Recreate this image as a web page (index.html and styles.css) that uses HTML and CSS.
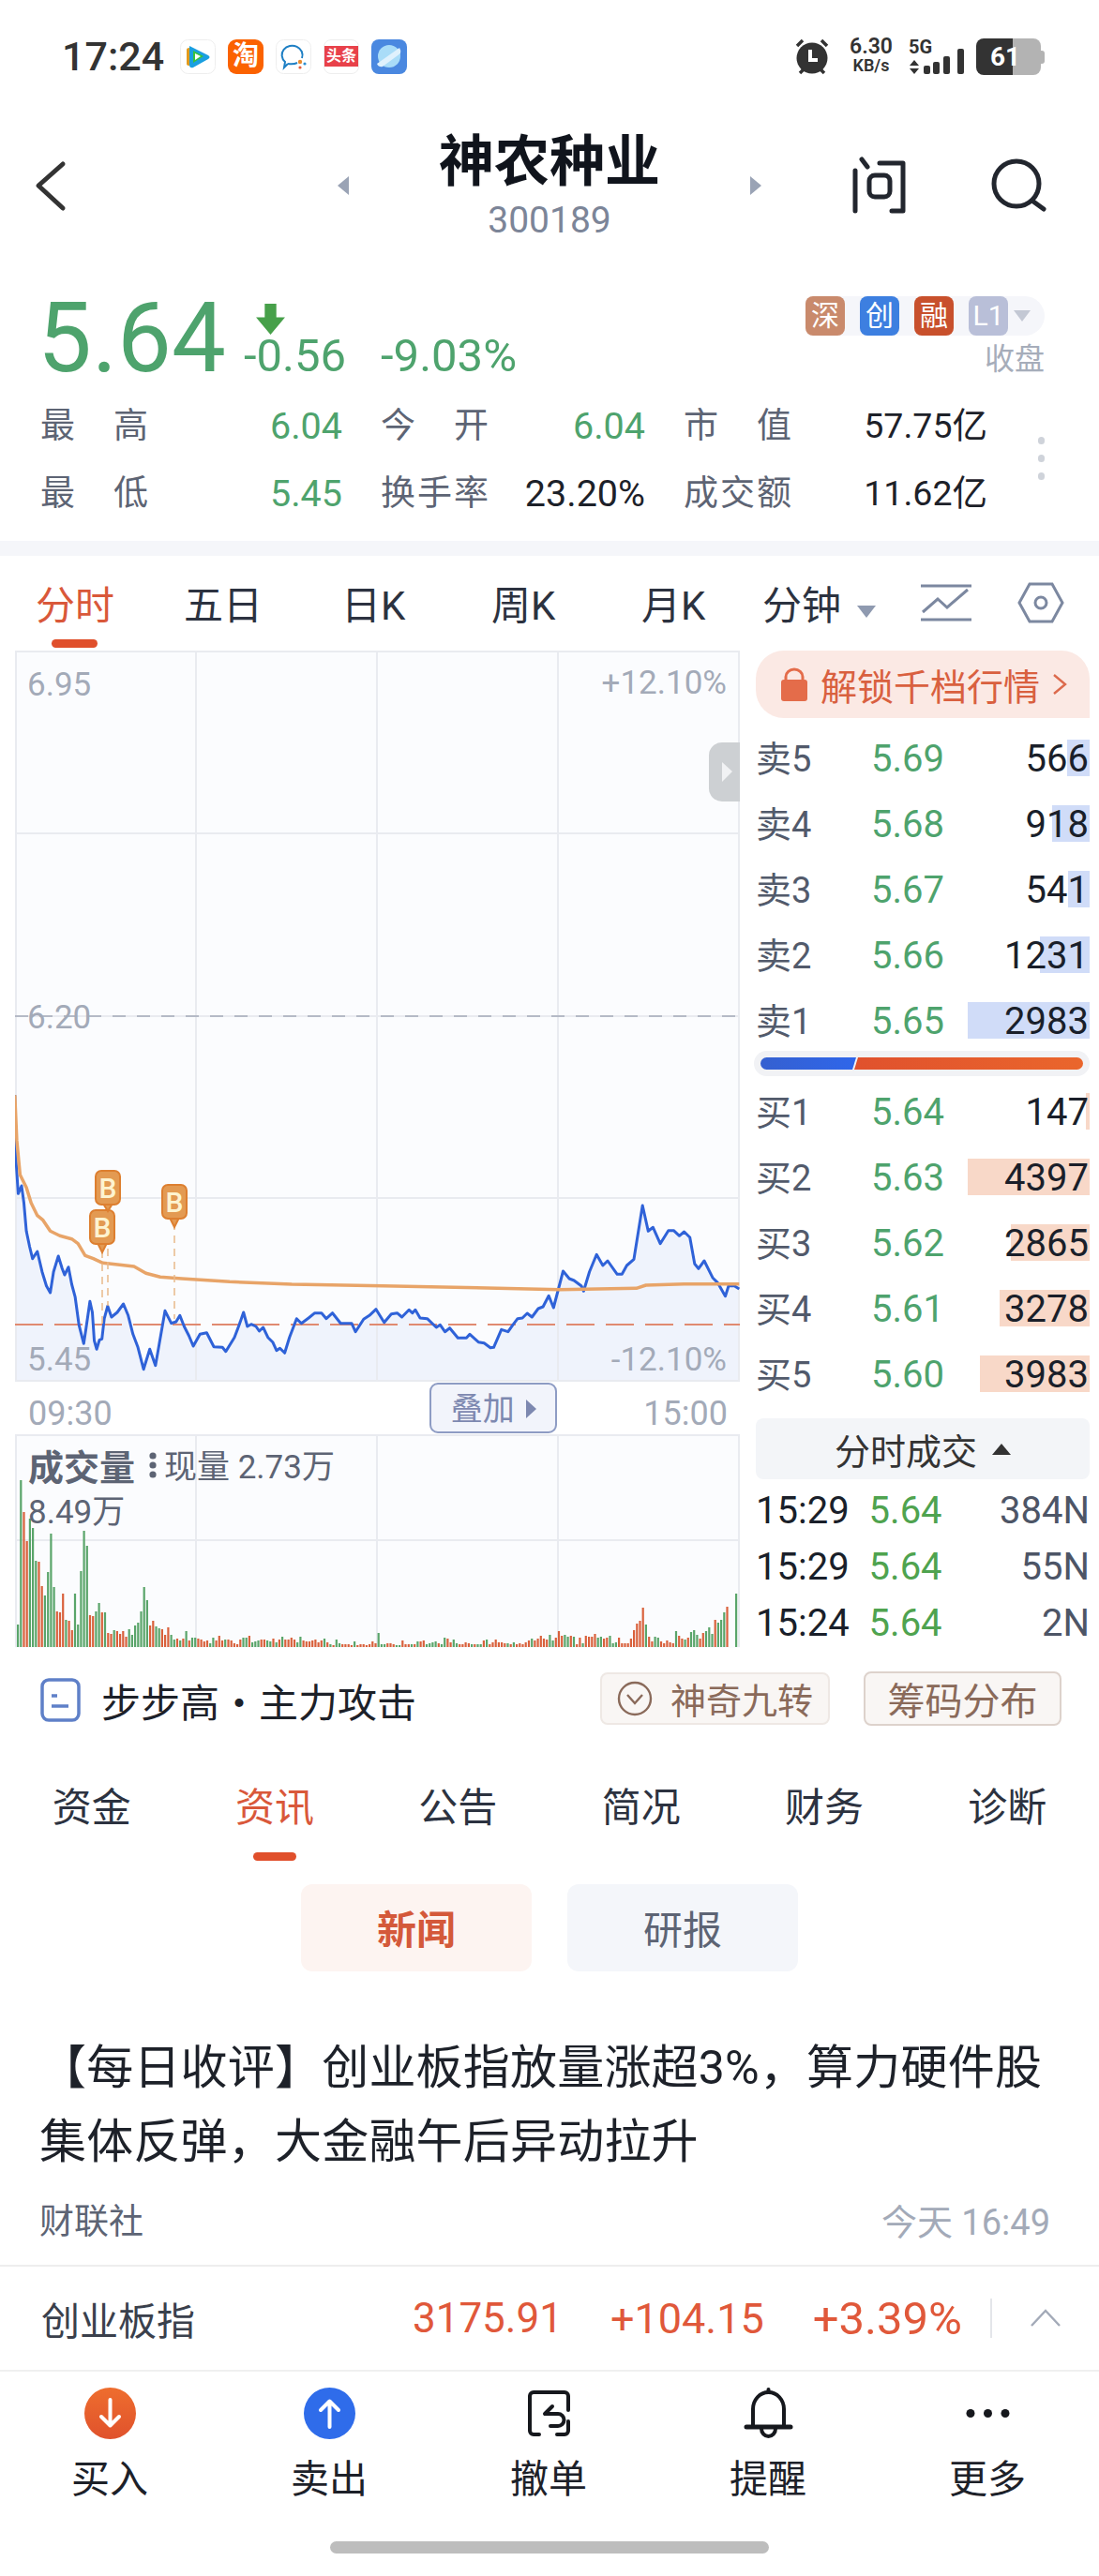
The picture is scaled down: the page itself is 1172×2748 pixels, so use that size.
FILE: index.html
```html
<!DOCTYPE html>
<html>
<head>
	<meta charset="UTF-8">
	<title></title>
	<link rel="stylesheet" href="styles.css">
</head>
<body>
<div class="page">
	<!-- 状态栏 -->
	<div class="status">
		<span class="clock">17:24</span>
		<div class="apps">
			<svg class="app" viewBox="0 0 38 37"><rect x=".5" y=".5" width="37" height="36" rx="8" fill="#fff" stroke="#eee"/><path d="M7 11q0-2 3-2v19q-3 0-3-2z" fill="#e29a1c"/><path d="M10 7l20 10q3 2 0 4L14 30q-4 1-4-3z" fill="#1a9fe0"/><path d="M14 12l11 6-11 7z" fill="#38c23c"/><path d="M16 15l6 3-6 4z" fill="#fff"/></svg>
			<div class="app app-tao">淘</div>
			<svg class="app" viewBox="0 0 38 37"><rect x=".5" y=".5" width="37" height="36" rx="8" fill="#fff" stroke="#eee"/><path d="M13 26l-4 4 1-6a11 10 0 1 1 18-4" fill="none" stroke="#1e7fc4" stroke-width="2"/><path d="M13 26q6 1 10-1" fill="none" stroke="#1e7fc4" stroke-width="2"/><circle cx="26" cy="24" r="2.200" fill="#e88a2e"/><circle cx="31" cy="26" r="1.600" fill="#2d8fd0"/><circle cx="26" cy="30" r="1.600" fill="#e25a3c"/></svg>
			<div class="app app-news"><span class="news-band">头条</span></div>
			<svg class="app" viewBox="0 0 38 37"><rect width="38" height="37" rx="8" fill="#4a88e0"/><circle cx="19" cy="18" r="12" fill="#a9dcf8"/><path d="M6 26L30 9q2 3 1 6L12 29q-4 1-6-3z" fill="#dff1fd"/></svg>
		</div>
		<div class="sys">
			<svg class="alarm" viewBox="0 0 40 40"><circle cx="20" cy="22" r="16.500" fill="#333"/><path d="M4 9l6-6M36 9l-6-6M7 38l4-4M33 38l-4-4" stroke="#333" stroke-width="3.500" fill="none"/><path d="M18 13v11h8" stroke="#fff" stroke-width="4" fill="none"/></svg>
			<div class="speed"><b>6.30</b><span>KB/s</span></div>
			<svg class="net" viewBox="0 -4 60 44"><text class="net-txt" x="0" y="17">5G</text><path d="M6 24l5 6H1zM6 39l5-6H1z" fill="#333"/><g fill="#333"><rect x="16" y="30" width="7" height="9" rx="2"/><rect x="26" y="26" width="7" height="13" rx="2"/><rect x="37" y="20" width="7" height="19" rx="2"/><rect x="52" y="12" width="7" height="27" rx="2"/></g></svg>
			<div class="battery">61</div>
		</div>
	</div>

	<!-- 标题 -->
	<div class="head">
		<svg class="back" viewBox="0 0 40 66"><path d="M32 10L6 33l26 24" fill="none" stroke="#333" stroke-width="5" stroke-linecap="round" stroke-linejoin="round"/></svg>
		<i class="tri tri-l"></i>
		<div class="title">
			<h1>神农种业</h1>
			<p>300189</p>
		</div>
		<i class="tri tri-r"></i>
		<svg class="ask" viewBox="905 165 62 66"><g fill="none" stroke="#22262e" stroke-width="5" stroke-linecap="round" stroke-linejoin="round"><path d="M912 182v43M919 170l6 8M938 174h25v51h-12"/><rect x="927" y="187" width="22" height="23" rx="6"/></g></svg>
		<svg class="find" viewBox="0 0 66 66"><g fill="none" stroke="#22262e" stroke-width="5" stroke-linecap="round"><circle cx="32" cy="31" r="24"/><path d="M50 50l11 8"/></g></svg>
	</div>

	<!-- 报价 -->
	<div class="quote">
		<div class="price-row">
			<div class="price">5.64</div>
			<div class="change">
				<svg class="down" viewBox="0 0 30 32"><path d="M9 0h12v14h9L15 32 0 14h9z" fill="#47a04a"/></svg>
				<div class="change-nums"><span>-0.56</span><span>-9.03%</span></div>
			</div>
			<div class="flags">
				<div class="tags">
					<b class="tag t-shen">深</b>
					<b class="tag t-chuang">创</b>
					<b class="tag t-rong">融</b>
					<b class="tag t-l1">L1</b>
					<i class="tag-caret"></i>
				</div>
				<div class="closed">收盘</div>
			</div>
		</div>
		<div class="stats-wrap">
			<div class="stats">
				<div class="stat"><label>最高</label><span class="green">6.04</span></div>
				<div class="stat"><label>今开</label><span class="green">6.04</span></div>
				<div class="stat"><label>市值</label><span class="amt">57.75亿</span></div>
				<div class="stat"><label>最低</label><span class="green">5.45</span></div>
				<div class="stat"><label>换手率</label><span>23.20%</span></div>
				<div class="stat"><label>成交额</label><span class="amt">11.62亿</span></div>
			</div>
			<div class="more-dots"><i></i><i></i><i></i></div>
		</div>
	</div>
	<div class="band"></div>

	<!-- 分时 tabs -->
	<div class="ktabs">
		<span class="on">分时</span>
		<span>五日</span>
		<span>日K</span>
		<span>周K</span>
		<span>月K</span>
		<span>分钟<i class="caret"></i></span>
		<svg class="ico-line" viewBox="0 0 54 40"><g fill="none" stroke="#7c88a0" stroke-width="3"><path d="M0 2h54M0 38h54"/><path d="M2 30l16-14 10 9L50 6"/></g></svg>
		<svg class="ico-hex" viewBox="0 0 50 44"><g fill="none" stroke="#7c88a0" stroke-width="3"><path d="M13 2h24l11 20-11 20H13L2 22z"/><circle cx="25" cy="22" r="6"/></g></svg>
	</div>

	<div class="market">
		<div class="chart-col">
			<svg class="price-chart" viewBox="16 694 773 780">
				<rect x="16" y="694" width="773" height="780" fill="#fbfcfe"/>
				<polygon id="area" fill="#eff3fc"/>
				<g class="grid-lines">
					<path d="M17 695v778M209 695v778M402 695v778M595 695v778M788 695v778"/>
					<path d="M16 695h773M16 889h773M16 1084h773M16 1278h773M16 1473h773"/>
				</g>
				<path d="M16 1084h773" class="mid-dash"/>
				<path d="M16 1413h773" class="last-dash"/>
				<text class="axis" x="29" y="742">6.95</text>
				<text class="axis" x="29" y="1097">6.20</text>
				<text class="axis" x="29" y="1462">5.45</text>
				<text class="axis end" x="775" y="740">+12.10%</text>
				<text class="axis end" x="775" y="1462">-12.10%</text>
				<polyline id="line" class="line-price"/>
				<polyline id="avg" class="line-avg"/>
				<path class="mark-stem" d="M115 1290v103M109 1334v79M186 1304v103"/>
				<g class="mark">
					<path d="M109 1336l-5-10h10z"/><rect x="96" y="1291" width="26" height="36" rx="6"/><text x="109" y="1320">B</text>
					<path d="M115 1292l-5-8h10z"/><rect x="102" y="1249" width="26" height="36" rx="6"/><text x="115" y="1278">B</text>
					<path d="M186 1309l-5-10h10z"/><rect x="173" y="1264" width="26" height="36" rx="6"/><text x="186" y="1293">B</text>
				</g>
				<path class="handle" d="M789 792h-19a14 14 0 0 0-14 14v35a14 14 0 0 0 14 14h19z"/>
				<path d="M770 813l11 10-11 11z" fill="#f1f2f4"/>
			</svg>
			<div class="axis-row">
				<span>09:30</span>
				<div class="overlay-btn">叠加<i></i></div>
				<span>15:00</span>
			</div>
			<svg class="vol-chart" viewBox="16 1530 773 228">
				<rect x="16" y="1530" width="773" height="228" fill="#fbfcfe"/>
				<g class="grid-lines">
					<path d="M17 1531v226M209 1531v226M402 1531v226M595 1531v226M788 1531v226"/>
					<path d="M16 1531h773M16 1643h773"/>
				</g>
				<g id="bars"></g>
				<text class="vol-title" x="30" y="1579">成交量</text>
				<g fill="#5d6474"><circle cx="163" cy="1553" r="3.600"/><circle cx="163" cy="1563" r="3.600"/><circle cx="163" cy="1573" r="3.600"/></g>
				<text class="vol-txt" x="175" y="1577">现量 2.73万</text>
				<text class="vol-txt" x="30" y="1625">8.49万</text>
			</svg>
		</div>

		<div class="book-col">
			<div class="unlock">
				<svg class="lock" viewBox="0 0 30 36"><path d="M6 14V10a9 8 0 0 1 18 0v4" fill="none" stroke="#e46c4a" stroke-width="3"/><rect x="1" y="13" width="28" height="23" rx="3" fill="#e46c4a"/></svg>
				解锁千档行情
				<svg class="unlock-go" viewBox="0 0 16 24"><path d="M2 2l12 10L2 22" fill="none" stroke="#dc6a4c" stroke-width="2.400"/></svg>
			</div>
			<div class="book sell">
				<div class="row"><u class="depth" style="width:24px"></u><label>卖5</label><span class="px">5.69</span><span class="qty">566</span></div>
				<div class="row"><u class="depth" style="width:40px"></u><label>卖4</label><span class="px">5.68</span><span class="qty">918</span></div>
				<div class="row"><u class="depth" style="width:23px"></u><label>卖3</label><span class="px">5.67</span><span class="qty">541</span></div>
				<div class="row"><u class="depth" style="width:53px"></u><label>卖2</label><span class="px">5.66</span><span class="qty">1231</span></div>
				<div class="row"><u class="depth" style="width:130px"></u><label>卖1</label><span class="px">5.65</span><span class="qty">2983</span></div>
			</div>
			<div class="ratio"><i class="r-sell"></i><i class="r-buy"></i></div>
			<div class="book buy">
				<div class="row"><u class="depth" style="width:4px"></u><label>买1</label><span class="px">5.64</span><span class="qty">147</span></div>
				<div class="row"><u class="depth" style="width:130px"></u><label>买2</label><span class="px">5.63</span><span class="qty">4397</span></div>
				<div class="row"><u class="depth" style="width:84px"></u><label>买3</label><span class="px">5.62</span><span class="qty">2865</span></div>
				<div class="row"><u class="depth" style="width:96px"></u><label>买4</label><span class="px">5.61</span><span class="qty">3278</span></div>
				<div class="row"><u class="depth" style="width:117px"></u><label>买5</label><span class="px">5.60</span><span class="qty">3983</span></div>
			</div>
			<div class="deal-head">分时成交<i></i></div>
			<div class="deal"><span>15:29</span><span class="px">5.64</span><span class="vol">384N</span></div>
			<div class="deal"><span>15:29</span><span class="px">5.64</span><span class="vol">55N</span></div>
			<div class="deal"><span>15:24</span><span class="px">5.64</span><span class="vol">2N</span></div>
		</div>
	</div>

	<!-- 指标 -->
	<div class="signal">
		<svg class="sig-ico" viewBox="0 0 43 47"><rect x="2" y="2" width="39" height="43" rx="7" fill="#fff" stroke="#5f80c8" stroke-width="3.500"/><path d="M12 19h6M12 30h18" stroke="#5f80c8" stroke-width="3.500"/></svg>
		<span class="sig-txt">步步高・主力攻击</span>
		<div class="sig-btn b-nine">
			<svg viewBox="0 0 38 38"><circle cx="19" cy="19" r="17" fill="none" stroke="#8a6a5a" stroke-width="2.400"/><path d="M11 15l8 9 8-9" fill="none" stroke="#8a6a5a" stroke-width="2.400"/></svg>
			神奇九转
		</div>
		<div class="sig-btn b-chip">筹码分布</div>
	</div>

	<div class="info-tabs">
		<span>资金</span>
		<span class="on">资讯</span>
		<span>公告</span>
		<span>简况</span>
		<span>财务</span>
		<span>诊断</span>
	</div>
	<div class="sub-tabs">
		<span class="on">新闻</span>
		<span>研报</span>
	</div>

	<div class="article">
		<h2>【每日收评】创业板指放量涨超3%，算力硬件股集体反弹，大金融午后异动拉升</h2>
		<div class="meta"><span>财联社</span><em>今天 16:49</em></div>
	</div>

	<div class="index-row">
		<span class="idx-name">创业板指</span>
		<span class="idx-num first">3175.91</span>
		<span class="idx-num">+104.15</span>
		<span class="idx-num pct">+3.39%</span>
		<i class="idx-sep"></i>
		<svg class="idx-up" viewBox="0 0 34 20"><path d="M2 18L17 2l15 16" fill="none" stroke="#a3aab8" stroke-width="2.400"/></svg>
	</div>

	<div class="nav">
		<div class="nav-item">
			<svg viewBox="0 0 55 55"><defs><linearGradient id="gb" x1="0" y1="0" x2="0" y2="1"><stop offset="0" stop-color="#ee6d2e"/><stop offset="1" stop-color="#e0522c"/></linearGradient></defs><circle cx="27.500" cy="27.500" r="27.500" fill="url(#gb)"/><path d="M27.500 13v27M18 31l9.500 9.500L37 31" fill="none" stroke="#fff" stroke-width="4" stroke-linecap="round" stroke-linejoin="round"/></svg>
			<span>买入</span>
		</div>
		<div class="nav-item">
			<svg viewBox="0 0 55 55"><circle cx="27.500" cy="27.500" r="27.500" fill="#2f6cea"/><path d="M27.500 42V15M18 24l9.500-9.500L37 24" fill="none" stroke="#fff" stroke-width="4" stroke-linecap="round" stroke-linejoin="round"/></svg>
			<span>卖出</span>
		</div>
		<div class="nav-item">
			<svg viewBox="0 0 55 55"><g fill="none" stroke="#16181d" stroke-width="4" stroke-linecap="round" stroke-linejoin="round"><path d="M17 50H11a4 4 0 0 1-4-4V9a4 4 0 0 1 4-4h33a4 4 0 0 1 4 4v15M36 50h8a4 4 0 0 0 4-4V36"/><path d="M31 20l-8 8h14a6 6 0 0 1 0 13h-8"/></g></svg>
			<span>撤单</span>
		</div>
		<div class="nav-item">
			<svg viewBox="0 0 55 55"><g fill="none" stroke="#16181d" stroke-width="4" stroke-linecap="round" stroke-linejoin="round"><path d="M11 42V23a16.500 18 0 0 1 33 0v19"/><path d="M4 42h47" stroke-width="5"/><path d="M20 44a7.500 8 0 0 0 15 0"/><path d="M27.500 2v3"/></g></svg>
			<span>提醒</span>
		</div>
		<div class="nav-item">
			<svg viewBox="0 0 55 55"><g fill="#16181d"><circle cx="9" cy="27.500" r="4.500"/><circle cx="27.500" cy="27.500" r="4.500"/><circle cx="46" cy="27.500" r="4.500"/></g></svg>
			<span>更多</span>
		</div>
	</div>
	<div class="home-bar"></div>
</div>
<script src="chart.js"></script>
</body>
</html>
```
FILE: styles.css
```css
* {
	box-sizing: border-box;
}
body {
	margin: 0;
	background: #fff;
	font-family: Roboto, "Noto Sans CJK SC", sans-serif;
	color: #1d2129;
}
h1, h2, p {
	margin: 0;
	font-weight: normal;
}
i, em, u, label {
	font-style: normal;
	text-decoration: none;
}
.page {
	width: 1172px;
	height: 2748px;
	overflow: hidden;
}
.green {
	color: #4ea36d;
}

/* status */
.status {
	display: flex;
	align-items: center;
	height: 120px;
	padding: 0 62px 0 66px;
	color: #333;
}
.clock {
	font-size: 43px;
	font-weight: 500;
	width: 126px;
}
.apps {
	display: flex;
	gap: 13px;
}
.app {
	width: 38px;
	height: 37px;
	display: block;
}
.app-tao {
	background: #fb6200;
	border-radius: 9px;
	color: #fff;
	font-size: 28px;
	line-height: 36px;
	text-align: center;
	font-weight: 700;
}
.app-news {
	border: 1px solid #eee;
	border-radius: 8px;
	display: flex;
	align-items: center;
}
.news-band {
	display: block;
	width: 100%;
	background: #e8414a;
	color: #fff;
	font-size: 16px;
	line-height: 22px;
	font-weight: 700;
	text-align: center;
	white-space: nowrap;
}
.sys {
	display: flex;
	align-items: center;
	margin-left: auto;
}
.alarm {
	width: 40px;
	height: 40px;
}
.speed {
	width: 50px;
	margin-left: 18px;
	text-align: center;
	line-height: 20px;
}
.speed b {
	display: block;
	font-size: 23px;
	font-weight: 600;
}
.speed span {
	display: block;
	font-size: 18px;
	font-weight: 600;
}
.net {
	width: 60px;
	height: 44px;
	margin: -4px 0 0 15px;
}
.net-txt {
	font-size: 20px;
	font-weight: 700;
	fill: #333;
}
.battery {
	position: relative;
	width: 69px;
	height: 39px;
	margin-left: 12px;
	padding-left: 15px;
	border-radius: 8px;
	background: linear-gradient(90deg, #333 39px, #b3b3b3 39px);
	color: #fff;
	font-size: 28px;
	font-weight: 700;
	line-height: 39px;
}
.battery::after {
	content: "";
	position: absolute;
	right: -4px;
	top: 13px;
	width: 4px;
	height: 14px;
	background: #b3b3b3;
	border-radius: 0 3px 3px 0;
}

/* head */
.head {
	display: flex;
	align-items: flex-start;
	height: 145px;
	padding-left: 35px;
}
.back {
	width: 40px;
	height: 66px;
	margin-top: 45px;
}
.tri {
	width: 0;
	height: 0;
	margin-top: 68px;
	border-top: 10px solid transparent;
	border-bottom: 10px solid transparent;
}
.tri-l {
	margin-left: 285px;
	border-right: 12px solid #9aa3b5;
}
.tri-r {
	border-left: 12px solid #9aa3b5;
}
.title {
	width: 428px;
	text-align: center;
	padding-top: 21px;
}
.title h1 {
	font-size: 59px;
	line-height: 64px;
	font-weight: 700;
	color: #10141c;
}
.title p {
	margin-top: 8px;
	font-size: 39px;
	line-height: 44px;
	color: #7c8598;
}
.ask {
	width: 62px;
	height: 66px;
	margin: 45px 0 0 93px;
}
.find {
	width: 66px;
	height: 66px;
	margin: 45px 0 0 85px;
}

/* quote */
.quote {
	height: 312px;
	padding: 46px 58px 0 43px;
}
.price-row {
	display: flex;
	height: 99px;
}
.price {
	margin-left: -3px;
	width: 220px;
	font-size: 103px;
	line-height: 100px;
	color: #4ea36d;
}
.change {
	width: 340px;
	padding-top: 13px;
}
.down {
	display: block;
	width: 31px;
	height: 33px;
	margin-left: 13px;
}
.change-nums {
	display: flex;
	gap: 37px;
	font-size: 49px;
	line-height: 46px;
	color: #4ea36d;
}
.flags {
	margin-left: auto;
	padding-top: 5px;
}
.tags {
	display: flex;
	gap: 16px;
	align-items: center;
	background: #f5f6fa;
	border-radius: 8px 21px 21px 8px;
}
.tag {
	width: 42px;
	height: 42px;
	border-radius: 8px;
	color: #fff;
	font-size: 30px;
	line-height: 42px;
	text-align: center;
	font-weight: 400;
}
.t-shen {
	background: #c98a6c;
}
.t-chuang {
	background: #3d7fe0;
}
.t-rong {
	background: #c8502c;
}
.t-l1 {
	background: #b9bfd8;
}
.tag-caret {
	width: 0;
	height: 0;
	margin-left: -10px;
	margin-right: 15px;
	border-left: 9px solid transparent;
	border-right: 9px solid transparent;
	border-top: 12px solid #c3c8d4;
}
.closed {
	margin-top: 9px;
	font-size: 32px;
	line-height: 32px;
	color: #a6adba;
	text-align: right;
}
.stats-wrap {
	display: flex;
	align-items: center;
	margin-top: 7px;
}
.stats {
	display: grid;
	grid-template-columns: 322px 282px 324px;
	column-gap: 41px;
	width: 1010px;
}
.stat {
	display: flex;
	justify-content: space-between;
	height: 72px;
	font-size: 39.500px;
	line-height: 75px;
}
.stat label {
	width: 115px;
	font-size: 37px;
	color: #5d6474;
	text-align-last: justify;
}
.stat .amt {
	font-size: 37.500px;
}
.more-dots {
	display: flex;
	flex-direction: column;
	gap: 11px;
	margin-left: 54px;
}
.more-dots i {
	width: 7px;
	height: 8px;
	border-radius: 4px;
	background: #cfd3da;
}
.band {
	height: 16px;
	background: #f5f6fa;
}

/* k tabs */
.ktabs {
	display: grid;
	grid-template-columns: 158px 168px 160px 160px 129px 169px 103px 50px;
	align-items: center;
	height: 101px;
	padding: 0 0 2px 38px;
	font-size: 42px;
	color: #2c3240;
}
.ktabs span {
	position: relative;
	white-space: nowrap;
}
.ktabs .on {
	color: #d9583a;
}
.ktabs .on::after {
	content: "";
	position: absolute;
	left: 17px;
	bottom: -18px;
	width: 49px;
	height: 9px;
	border-radius: 5px;
	background: #e04f2b;
}
.caret {
	display: inline-block;
	margin-left: 17px;
	vertical-align: 2px;
	border-left: 10px solid transparent;
	border-right: 10px solid transparent;
	border-top: 13px solid #8f9ab0;
}
.ico-line {
	width: 54px;
	height: 40px;
}
.ico-hex {
	width: 50px;
	height: 44px;
}

/* market */
.market {
	display: grid;
	grid-template-columns: 773px 356px;
	column-gap: 17px;
	height: 1063px;
	padding-left: 16px;
}
.price-chart {
	display: block;
	width: 773px;
	height: 780px;
}
.grid-lines path {
	fill: none;
	stroke: #e9ebf0;
	stroke-width: 2;
}
.mid-dash {
	stroke: #b5bac6;
	stroke-width: 2;
	stroke-dasharray: 14 12;
}
.last-dash {
	stroke: #e08a70;
	stroke-width: 2;
	stroke-dasharray: 30 12;
}
.axis {
	font-size: 35px;
	fill: #a3aab8;
}
.axis.end {
	text-anchor: end;
}
.line-price {
	fill: none;
	stroke: #2f62d8;
	stroke-width: 3;
	stroke-linejoin: round;
}
.line-avg {
	fill: none;
	stroke: #e8a468;
	stroke-width: 3.500;
	stroke-linejoin: round;
}
.mark-stem {
	fill: none;
	stroke: #e9b98a;
	stroke-width: 1.500;
	stroke-dasharray: 8 6;
}
.mark rect, .mark path {
	fill: #e39a52;
	stroke: #dd7f30;
	stroke-width: 2;
}
.mark text {
	font-size: 30px;
	font-weight: 500;
	fill: #fdf3d0;
	text-anchor: middle;
}
.handle {
	fill: #cdd0d3;
}
.axis-row {
	display: flex;
	height: 56px;
	padding: 0 13px 0 14px;
	font-size: 36px;
	line-height: 52px;
	color: #a3aab8;
}
.axis-row span {
	padding-top: 8px;
}
.overlay-btn {
	display: flex;
	align-items: center;
	justify-content: center;
	gap: 12px;
	width: 136px;
	height: 54px;
	margin: 1px 92px 0 auto;
	padding-top: 2px;
	background: #f2f4fb;
	border: 2px solid #8e9cc4;
	border-radius: 9px;
	font-size: 34px;
	color: #7d88b0;
}
.overlay-btn i {
	border-top: 10px solid transparent;
	border-bottom: 10px solid transparent;
	border-left: 11px solid #7d88b0;
}
.vol-chart {
	display: block;
	width: 773px;
	height: 228px;
}
.bar-g {
	fill: #5aa56a;
}
.bar-r {
	fill: #d9613c;
}
.vol-title {
	font-size: 38px;
	font-weight: 700;
	fill: #5d6474;
}
.vol-txt {
	font-size: 35px;
	fill: #5d6474;
}

/* book */
.unlock {
	display: flex;
	align-items: center;
	width: 356px;
	height: 72px;
	padding-left: 26px;
	background: #fbe9e4;
	border-radius: 30px 30px 0 30px;
	font-size: 39px;
	color: #d9603f;
}
.lock {
	width: 30px;
	height: 36px;
	margin-right: 13px;
}
.unlock-go {
	width: 16px;
	height: 24px;
	margin-left: 13px;
}
.book {
	display: flex;
	flex-direction: column;
	gap: 31px;
}
.sell {
	margin-top: 23px;
}
.buy {
	margin-top: 18px;
}
.row {
	position: relative;
	display: flex;
	height: 39px;
	font-size: 40px;
	line-height: 42px;
}
.row label {
	position: relative;
	width: 123px;
	font-size: 38px;
	color: #525a6b;
}
.row .px {
	position: relative;
	width: 78px;
	text-align: center;
	color: #4ea36d;
}
.row .qty {
	position: relative;
	margin-left: auto;
	padding-right: 1px;
	color: #1a1f2a;
}
.depth {
	position: absolute;
	top: 0;
	right: 0;
	bottom: 0;
}
.sell .depth {
	background: #d0dcf8;
}
.buy .depth {
	background: #f8d8c8;
}
.ratio {
	display: flex;
	gap: 1px;
	width: 358px;
	height: 27px;
	margin: 13px 0 0 -2px;
	padding: 7px;
	background: #f1f2f5;
	border-radius: 14px;
}
.r-sell {
	width: 102px;
	background: linear-gradient(90deg, #3560d0, #2f66ea);
	border-radius: 7px 0 0 7px;
	clip-path: polygon(0 0, 100% 0, calc(100% - 4px) 100%, 0 100%);
}
.r-buy {
	flex: 1;
	margin-left: -3px;
	background: linear-gradient(90deg, #e0512d, #ea662c);
	border-radius: 0 7px 7px 0;
	clip-path: polygon(4px 0, 100% 0, 100% 100%, 0 100%);
}
.deal-head {
	display: flex;
	align-items: center;
	justify-content: center;
	gap: 16px;
	height: 65px;
	margin-top: 28px;
	background: #f3f5f8;
	border-radius: 8px;
	font-size: 38px;
	color: #333;
}
.deal-head i {
	border-left: 10px solid transparent;
	border-right: 10px solid transparent;
	border-bottom: 12px solid #333;
}
.deal {
	display: flex;
	height: 60px;
	font-size: 40px;
	line-height: 63px;
	color: #1a1f2a;
}
.deal .px {
	width: 80px;
	margin-left: 21px;
	color: #4fa34f;
}
.deal .vol {
	margin-left: auto;
	color: #4d5566;
}
.deal-head + .deal {
	margin-top: 2px;
}

/* signal */
.signal {
	display: flex;
	align-items: center;
	height: 112px;
	padding: 0 40px 0 43px;
}
.sig-ico {
	width: 43px;
	height: 47px;
}
.sig-txt {
	margin-left: 22px;
	font-size: 42px;
	color: #1d2129;
}
.sig-btn {
	display: flex;
	align-items: center;
	justify-content: center;
	background: #f9f6f4;
	border: 2px solid #eee8e4;
	border-radius: 8px;
	color: #8a6a5a;
	margin-top: -3px;
}
.b-nine {
	gap: 19px;
	width: 245px;
	height: 56px;
	margin-left: auto;
	font-size: 38px;
}
.b-nine svg {
	width: 38px;
	height: 38px;
}
.b-chip {
	width: 211px;
	height: 58px;
	margin-left: 36px;
	border-color: #ddd2cc;
	font-size: 40px;
}

/* info */
.info-tabs {
	display: grid;
	grid-template-columns: repeat(6, 1fr);
	height: 114px;
	font-size: 42px;
	line-height: 120px;
	text-align: center;
	color: #2c3240;
}
.info-tabs span {
	position: relative;
}
.info-tabs .on {
	color: #d9583a;
}
.info-tabs .on::after {
	content: "";
	position: absolute;
	left: 75px;
	bottom: 4px;
	width: 46px;
	height: 9px;
	border-radius: 5px;
	background: #e04f2b;
}
.sub-tabs {
	display: flex;
	justify-content: center;
	gap: 38px;
	margin-top: 27px;
}
.sub-tabs span {
	width: 246px;
	height: 93px;
	border-radius: 12px;
	background: #f4f6fa;
	font-size: 42px;
	line-height: 99px;
	text-align: center;
	color: #5d6474;
}
.sub-tabs .on {
	background: #fdf4f1;
	color: #d4593a;
	font-weight: 700;
}
.article {
	padding: 64px 52px 0 42px;
}
.article h2 {
	font-size: 50px;
	line-height: 79px;
	letter-spacing: .2px;
	color: #1d2129;
}
.meta {
	display: flex;
	justify-content: space-between;
	margin-top: 24px;
	font-size: 37px;
	line-height: 44px;
	color: #5d6474;
}
.meta em {
	font-size: 38px;
	color: #a3aab8;
}
.index-row {
	display: flex;
	align-items: center;
	height: 114px;
	margin-top: 23px;
	padding: 0 40px 0 44px;
	border-top: 2px solid #eee;
	border-bottom: 2px solid #f0f0f0;
}
.idx-name {
	font-size: 41px;
	color: #3a404c;
}
.idx-num {
	margin-left: 51px;
	font-size: 45px;
	color: #e0583a;
}
.idx-num.first {
	margin-left: auto;
	font-size: 44px;
}
.idx-num.pct {
	margin-left: 52px;
	font-size: 49px;
}
.idx-sep {
	width: 2px;
	height: 42px;
	margin-left: 30px;
	background: #e4e6ea;
}
.idx-up {
	width: 34px;
	height: 20px;
	margin-left: 40px;
}
.nav {
	display: grid;
	grid-template-columns: repeat(5, 234px);
	padding-top: 17px;
}
.nav-item {
	display: flex;
	flex-direction: column;
	align-items: center;
	font-size: 41px;
	line-height: 44px;
	color: #1d2129;
}
.nav-item svg {
	width: 55px;
	height: 55px;
}
.nav-item span {
	margin-top: 21px;
}
.home-bar {
	width: 468px;
	height: 13px;
	margin: 44px auto 0;
	border-radius: 7px;
	background: #bdbdbd;
}
```
FILE: chart.js
```js
// 坐标是从截图上量出来的，x 除 1.96，y 除 3 再加 1150
var pricePts = [31,55,33,250,38,370,45,345,50,400,55,490,62,540,68,578,78,555,88,620,97,665,105,687,112,620,122,570,130,610,135,630,143,605,150,660,157,700,165,790,175,850,180,800,188,715,193,750,197,840,202,868,208,838,213,835,218,770,225,730,233,765,245,750,258,723,268,760,278,820,288,860,300,932,313,868,325,920,333,850,345,745,358,785,368,780,376,760,385,795,395,825,404,858,418,820,432,815,447,860,465,862,472,875,490,830,500,790,509,750,517,795,525,788,535,795,542,810,550,798,560,830,570,845,578,872,585,865,595,880,605,830,620,770,630,785,645,768,658,752,672,752,682,770,695,752,712,785,735,785,743,812,760,772,772,760,786,740,803,782,818,755,830,752,840,765,855,742,862,752,868,742,878,768,893,770,912,798,920,790,930,812,940,800,957,832,975,832,982,820,1000,845,1012,848,1025,863,1032,862,1048,805,1062,812,1072,790,1082,770,1092,768,1102,753,1112,765,1125,738,1135,732,1147,697,1157,735,1177,618,1190,642,1200,648,1215,665,1220,682,1232,620,1247,565,1260,600,1270,585,1290,628,1300,628,1310,600,1325,580,1343,408,1355,490,1365,478,1380,530,1397,488,1408,488,1420,505,1430,492,1442,510,1452,595,1460,610,1472,585,1490,640,1500,655,1516,698,1523,665,1535,665,1545,675];
var avgPts = [31,55,35,200,42,310,55,350,65,400,78,440,90,455,105,490,125,505,150,515,163,530,178,568,195,578,215,592,250,598,280,603,305,625,335,637,380,642,480,652,610,660,800,665,1040,673,1170,677,1330,673,1350,663,1430,659,1545,659];

// 量柱，正数绿，负数红
var vols = [24,178,-144,-113,137,127,92,-91,-65,55,80,121,64,-38,-37,-57,29,-28,-18,57,24,81,124,108,-34,-33,38,47,-37,37,-15,-14,18,-17,-14,-17,-11,19,13,23,26,38,64,50,-23,-28,22,20,-19,-13,-21,13,8,-9,7,-9,17,-7,10,10,-9,-8,-6,
	-7,4,10,-7,-12,-7,8,-8,-7,-4,-3,-8,10,10,-12,5,6,7,-8,-8,7,6,-9,5,-8,11,-8,-8,-10,-8,5,11,-7,-6,-6,-7,-8,-5,-7,9,-5,3,-2,8,4,-3,-3,-3,-2,6,-2,-3,-3,-2,-3,-6,
	-4,15,3,3,-4,-4,-3,2,2,-7,-3,-3,3,-3,6,-6,-7,3,4,5,6,-4,3,10,-9,-5,8,4,-3,-3,-5,-4,3,-3,3,3,-7,8,-3,-5,-8,-5,-5,-4,4,-3,5,-3,-4,-3,-5,-7,9,-7,-9,-12,-9,-8,13,7,-10,-17,-12,13,11,-12,11,-3,-10,4,-12,-11,-11,-14,10,11,-9,-10,12,4,5,-10,-4,-4,-4,-9,-18,-25,-28,-42,24,-11,-6,11,10,-6,-4,-7,-5,-4,17,-12,-9,8,-10,16,18,13,-9,-15,17,21,14,-29,26,29,37,-43,0,0,57];

function toPoints(arr) {
	var out = [];
	for (var i = 0; i < arr.length; i += 2) {
		out.push((arr[i] / 1.96).toFixed(1) + ',' + (1150 + arr[i + 1] / 3).toFixed(1));
	}
	return out;
}

var line = toPoints(pricePts);
document.getElementById('line').setAttribute('points', line.join(' '));
document.getElementById('avg').setAttribute('points', toPoints(avgPts).join(' '));
document.getElementById('area').setAttribute('points', line.join(' ') + ' 788,1473 16,1473');

var bars = document.getElementById('bars');
var step = 766 / (vols.length - 1);
vols.forEach(function(v, i) {
	if (!v) return;
	var r = document.createElementNS('http://www.w3.org/2000/svg', 'rect');
	var h = Math.abs(v);
	r.setAttribute('x', (18 + step * i).toFixed(1));
	r.setAttribute('y', 1757 - h);
	r.setAttribute('width', 2.2);
	r.setAttribute('height', h);
	r.setAttribute('class', v > 0 ? 'bar-g' : 'bar-r');
	bars.appendChild(r);
});
```
